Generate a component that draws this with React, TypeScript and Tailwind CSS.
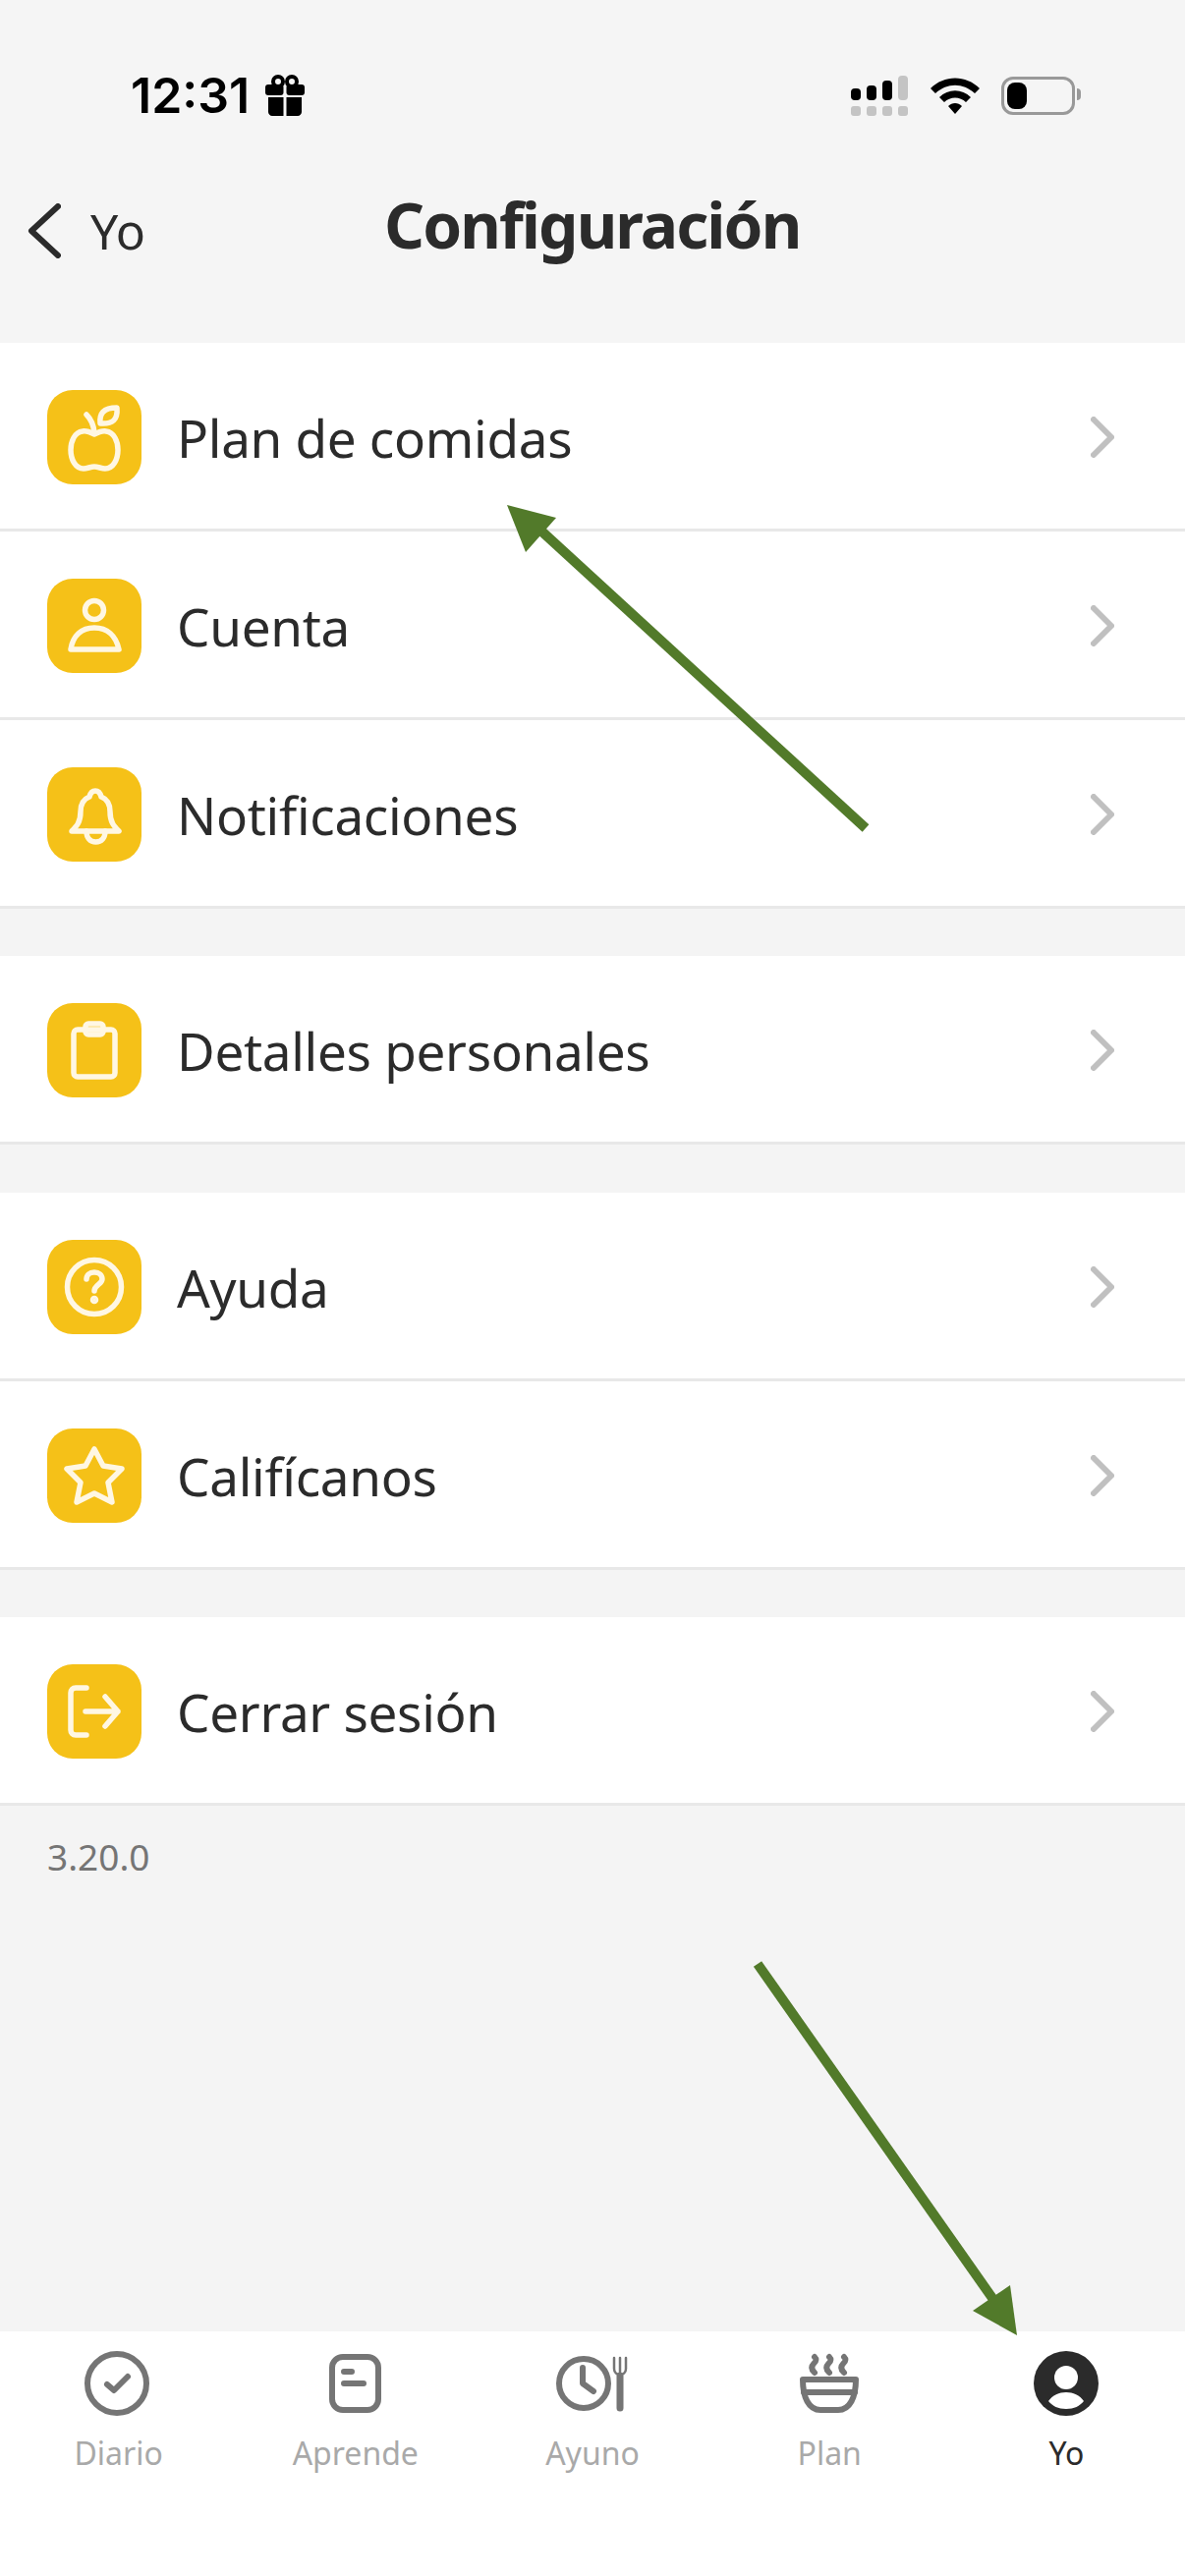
import type { ReactNode } from 'react';

const Apple = () => (
  <svg viewBox="0 0 96 96" className="h-24 w-24" fill="none" stroke="#fff7e3" strokeWidth="5.5" strokeLinecap="round" strokeLinejoin="round">
    <path d="M48 45c-4-2-8-4-12-3-8 1-12 10-12 19 0 10 5 19 13 19 4 0 7-2 11-2s7 2 11 2c8 0 13-9 13-19 0-9-4-18-12-19-4-1-8 1-12 3z" />
    <path d="M40 25c4 4 7 9 8 18" />
    <path d="M54 34c-1-10 3-16 17-16 1 12-4 17-17 16z" />
  </svg>
);

const Person = () => (
  <svg viewBox="0 0 96 96" className="h-24 w-24" fill="none" stroke="#fff7e3" strokeWidth="5.5" strokeLinecap="round" strokeLinejoin="round">
    <circle cx="48" cy="32" r="9.5" />
    <path d="M24 72c2-14 11-22 24-22s22 8 25 22z" />
  </svg>
);

const Bell = () => (
  <svg viewBox="0 0 96 96" className="h-24 w-24" fill="none" stroke="#fff7e3" strokeWidth="5.5" strokeLinecap="round" strokeLinejoin="round">
    <path d="M25 65c5-5 9-9 9-20 0-9 4-13 9-15 1-4 3-6 6-6s5 2 6 6c5 2 9 6 9 15 0 11 4 15 9 20z" />
    <path d="M40 65c0 7 4 11 9.5 11s9.5-4 9.5-11" />
  </svg>
);

const Clipboard = () => (
  <svg viewBox="0 0 96 96" className="h-24 w-24" fill="none" stroke="#fff7e3" strokeWidth="5.5" strokeLinecap="round" strokeLinejoin="round">
    <rect x="27" y="27" width="42" height="48" rx="4" />
    <rect x="39" y="21" width="18" height="11" rx="3" />
  </svg>
);

const Help = () => (
  <svg viewBox="0 0 96 96" className="h-24 w-24" fill="none" stroke="#fff7e3" strokeWidth="5.5" strokeLinecap="round" strokeLinejoin="round">
    <circle cx="48" cy="48" r="27.5" />
    <path d="M40 40c0-4 3-7 8-7s8 3 8 7c0 5-8 6-8 12" />
    <circle cx="48" cy="61" r="1.5" fill="#fff7e3" />
  </svg>
);

const Star = () => (
  <svg viewBox="0 0 96 96" className="h-24 w-24" fill="none" stroke="#fff7e3" strokeWidth="5.5" strokeLinecap="round" strokeLinejoin="round">
    <path d="M48 21l9 17 19 3-14 14 4 20-18-9-18 9 4-20-14-14 19-3z" />
  </svg>
);

const Logout = () => (
  <svg viewBox="0 0 96 96" className="h-24 w-24" fill="none" stroke="#fff7e3" strokeWidth="5.5" strokeLinecap="round" strokeLinejoin="round">
    <path d="M40 24H29c-3 0-5 2-5 5v38c0 3 2 5 5 5h11" />
    <path d="M39 48h33M59 33l13 15-13 15" />
  </svg>
);

const Chevron = () => (
  <svg viewBox="0 0 24 42" className="h-[42px] w-6" fill="none" stroke="#c0c0c0" strokeWidth="6" strokeLinecap="round" strokeLinejoin="round">
    <path d="M3 3l18 18L3 39" />
  </svg>
);

const Row = ({ icon, label }: { icon: ReactNode; label: string }) => (
  <div className="flex h-[192px] items-center border-b-[3px] border-[#e8e8e8] bg-white pl-12 pr-[72px] pt-[3px]">
    <div className="flex h-24 w-24 shrink-0 items-center justify-center rounded-[26px] bg-[#f5c118]">{icon}</div>
    <span className="ml-[36px] flex-1 pt-px text-[53px] leading-none tracking-[-0.3px] text-[#2b2b2b]">{label}</span>
    <Chevron />
  </div>
);

const tabs = [
  {
    label: 'Diario',
    icon: (
      <svg viewBox="0 0 80 80" className="h-20 w-20" fill="none" stroke="#757575" strokeLinecap="round" strokeLinejoin="round">
        <circle cx="38" cy="40" r="30" strokeWidth="6" />
        <path d="M28 41l7 6 14-14" strokeWidth="6" />
      </svg>
    ),
  },
  {
    label: 'Aprende',
    icon: (
      <svg viewBox="0 0 80 80" className="h-20 w-20" fill="none" stroke="#757575" strokeLinecap="round" strokeLinejoin="round">
        <rect x="16" y="13" width="47" height="54" rx="11" strokeWidth="6" />
        <path d="M28 28h8M28 40h20" strokeWidth="6" />
      </svg>
    ),
  },
  {
    label: 'Ayuno',
    icon: (
      <svg viewBox="0 0 80 80" className="h-20 w-20" fill="none" stroke="#757575" strokeLinecap="round" strokeLinejoin="round">
        <circle cx="31" cy="40" r="25" strokeWidth="6" />
        <path d="M30 24v16l11 8" strokeWidth="6" />
        <path d="M62 14v11c0 4 3 6 6 6s6-2 6-6V14M68 14v14" strokeWidth="2.5" />
        <path d="M68 32v33" strokeWidth="7" />
      </svg>
    ),
  },
  {
    label: 'Plan',
    icon: (
      <svg viewBox="0 0 80 80" className="h-20 w-20" fill="none" stroke="#757575" strokeLinecap="round" strokeLinejoin="round">
        <path d="M13 36h54c0 18-6 31-18 31H31C19 67 13 54 13 36z" strokeWidth="6" />
        <path d="M14 49h52" strokeWidth="6" />
        <path d="M25 13c3 3 1 5-1 7s-3 5 1 9M40 13c3 3 1 5-1 7s-3 5 1 9M55 13c3 3 1 5-1 7s-3 5 1 9" strokeWidth="6" />
      </svg>
    ),
  },
  {
    label: 'Yo',
    active: true,
    icon: (
      <svg viewBox="0 0 80 80" className="h-20 w-20">
        <circle cx="40" cy="40" r="33" fill="#2b2b2b" />
        <circle cx="40" cy="34" r="12" fill="#fff" />
        <path d="M22 58c4-6 11-9 18-9s14 3 18 9c-4 5-10 8-18 8s-14-3-18-8z" fill="#fff" />
      </svg>
    ),
  },
];

export default function App() {
  return (
    <div className='relative flex h-[2622px] w-[1206px] flex-col overflow-hidden bg-[#f4f4f4] font-["Noto_Sans","Liberation_Sans",sans-serif]'>
      {/* Status bar */}
      <div className="flex h-[121px] items-start bg-[#f5f5f5] pl-[133px] pr-[106px] pt-[79px]">
        <span className='-mt-[7px] font-["Inter",sans-serif] text-[50px] font-semibold leading-[50px] text-black'>12:31</span>
        <svg viewBox="0 0 40 42" className="-mt-[3px] ml-4 h-[42px] w-10">
          <circle cx="13" cy="7" r="5" fill="none" stroke="#000" strokeWidth="4" />
          <circle cx="27" cy="7" r="5" fill="none" stroke="#000" strokeWidth="4" />
          <rect x="0" y="10" width="18.5" height="11" rx="3" fill="#000" />
          <rect x="21.5" y="10" width="18.5" height="11" rx="3" fill="#000" />
          <path d="M3 23h15.5v19H7c-2 0-4-2-4-4zM21.5 23H37v15c0 2-2 4-4 4H21.5z" fill="#000" />
        </svg>
        <div className="ml-auto flex items-start">
          <svg viewBox="0 0 58 41" className="-mt-[2px] h-[41px] w-[58px]">
            <rect x="0" y="13" width="10" height="12" rx="4" fill="#000" />
            <rect x="16" y="10" width="10" height="15" rx="4" fill="#000" />
            <rect x="32" y="5" width="10" height="20" rx="4" fill="#000" />
            <rect x="48" y="0" width="10" height="25" rx="4" fill="#c4c4c4" />
            <rect x="0" y="31" width="10" height="10" rx="3" fill="#c4c4c4" />
            <rect x="16" y="31" width="10" height="10" rx="3" fill="#c4c4c4" />
            <rect x="32" y="31" width="10" height="10" rx="3" fill="#c4c4c4" />
            <rect x="48" y="31" width="10" height="10" rx="3" fill="#c4c4c4" />
          </svg>
          <svg viewBox="0 0 50 37" className="ml-[23px] h-[37px] w-[50px]">
            <path d="M0 11C14-3 36-3 50 11l-5 5C33 5 17 5 5 16z" fill="#000" />
            <path d="M9 20c9-9 23-9 32 0l-5 5c-6-6-16-6-22 0z" fill="#000" />
            <path d="M18 29c4-4 10-4 14 0l-7 8z" fill="#000" />
          </svg>
          <div className="-mt-px ml-[22px] flex h-[39px] w-[75px] items-center rounded-[12px] border-[3px] border-[#999] pl-[3px]">
            <div className="h-[27px] w-5 rounded-[8px] bg-black" />
          </div>
          <div className="ml-[2px] mt-[11px] h-[12px] w-[4px] rounded-r-full bg-[#999]" />
        </div>
      </div>

      {/* Nav bar */}
      <div className="relative flex h-[228px] items-start bg-[#f5f5f5]">
        <svg viewBox="0 0 34 56" className="absolute left-[28px] top-[86px] h-14 w-[34px]" fill="none" stroke="#2b2b2b" strokeWidth="6" strokeLinecap="round" strokeLinejoin="round">
          <path d="M31 3L4 28l27 25" />
        </svg>
        <span className="absolute left-[92px] top-[89px] text-[50px] leading-none text-[#2b2b2b]">Yo</span>
        <span className="w-full pl-[391px] pt-[76px] text-[64px] font-bold leading-none tracking-[-1.9px] text-[#2b2b2b]">Configuración</span>
      </div>

      <div className="flex flex-col">
        <Row icon={<Apple />} label="Plan de comidas" />
        <Row icon={<Person />} label="Cuenta" />
        <Row icon={<Bell />} label="Notificaciones" />
      </div>
      <div className="mt-12 flex flex-col">
        <Row icon={<Clipboard />} label="Detalles personales" />
      </div>
      <div className="mt-[49px] flex flex-col">
        <Row icon={<Help />} label="Ayuda" />
        <Row icon={<Star />} label="Califícanos" />
      </div>
      <div className="mt-12 flex flex-col">
        <Row icon={<Logout />} label="Cerrar sesión" />
      </div>
      <div className="pl-12 pt-[33px] text-[37px] leading-none text-[#757575]">3.20.0</div>

      {/* Tab bar */}
      <div className="mt-auto grid h-[249px] grid-cols-5 bg-white pt-[13px]">
        {tabs.map((tab) => (
          <div key={tab.label} className="flex flex-col items-center">
            {tab.icon}
            <span className={`mt-[15px] text-[32px] leading-none ${tab.active ? 'text-[#2b2b2b]' : 'text-[#a9a9a9]'}`}>{tab.label}</span>
          </div>
        ))}
      </div>

      {/* Annotation arrows */}
      <svg viewBox="0 0 1206 2622" className="pointer-events-none absolute inset-0 h-[2622px] w-[1206px]">
        <path d="M881 843L545 535" stroke="#527a2a" strokeWidth="10" />
        <path d="M516 514L566 527L535 562z" fill="#527a2a" />
        <path d="M771 1999L1012 2342" stroke="#527a2a" strokeWidth="10" />
        <path d="M1035 2377L1028 2326L990 2352z" fill="#527a2a" />
      </svg>
    </div>
  );
}
